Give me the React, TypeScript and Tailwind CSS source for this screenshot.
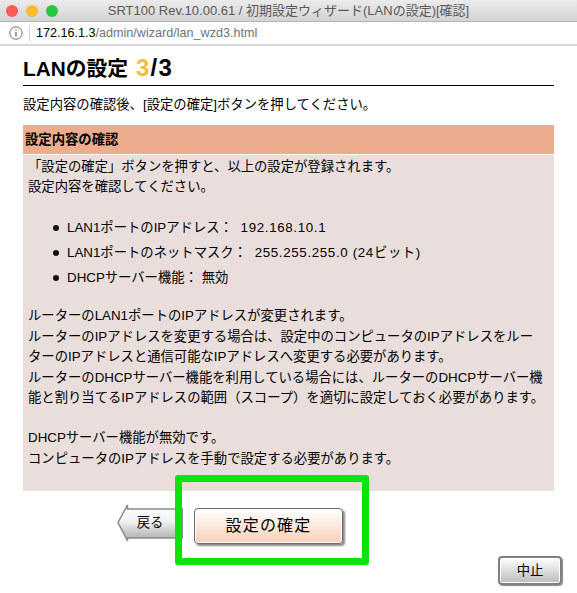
import React from "react";

const font = { fontFamily: '"Liberation Sans", "Noto Sans CJK JP", sans-serif' };

const Bullet = ({ children }: { children: React.ReactNode }) => (
  <li className="flex items-center gap-[8px]">
    <span className="h-[6px] w-[6px] shrink-0 rounded-full bg-[#111111]" />
    <span>{children}</span>
  </li>
);

const App = () => {
  return (
    <div className="relative h-[593px] w-[577px] overflow-hidden bg-white text-[13.33px] text-black" style={font}>
      {/* window title */}
      <div className="relative flex h-[22px] items-center justify-center border-b border-[#b4b4b4] bg-gradient-to-b from-[#ebebeb] to-[#d3d3d3] text-[13px] text-[#5a5a5a]">
        <div className="absolute left-[6px] top-[5px] flex gap-[8px]">
          <span className="h-[12px] w-[12px] rounded-full bg-[#fc5b57]" />
          <span className="h-[12px] w-[12px] rounded-full bg-[#fdbc2e]" />
          <span className="h-[12px] w-[12px] rounded-full bg-[#27c840]" />
        </div>
        <span>SRT100 Rev.10.00.61 / 初期設定ウィザード(LANの設定)[確認]</span>
      </div>

      {/* address bar */}
      <div className="flex h-[24px] items-center border-b-2 border-[#d8d8d8] bg-white pl-[9px] text-[12.6px]">
        <svg width="14" height="14" viewBox="0 0 14 14" fill="none" stroke="#6b6b6b">
          <circle cx="7" cy="7" r="6.2" />
          <path d="M7 6v4.5M7 3.4v1.2" strokeWidth="1.3" />
        </svg>
        <span className="ml-[6px] mr-[6px] h-[16px] w-px bg-[#cfcfcf]" />
        <span>172.16.1.3</span>
        <span className="text-[#6b737c]">/admin/wizard/lan_wzd3.html</span>
      </div>

      {/* page */}
      <div className="px-[23px]">
        <h1 className="h-[40px] border-b border-black pt-[10px] text-[20.8px] font-bold leading-[24px]">
          LANの設定{" "}
          <span className="ml-[2px] text-[24px] leading-[24px] tracking-[1.3px]">
            <span className="text-[#fdbb3b]">3</span>/3
          </span>
        </h1>
        <p className="mt-[9px] leading-[20px]">設定内容の確認後、[設定の確定]ボタンを押してください。</p>

        <div className="mt-[10px] bg-[#e9dedc]">
          <div className="flex h-[30px] items-center border-b border-white bg-[#eeac8e] px-[2px] font-bold">
            設定内容の確認
          </div>
          <div className="h-[336px] px-[5px] pt-[2px] leading-[20.4px]">
            <p>「設定の確定」ボタンを押すと、以上の設定が登録されます。</p>
            <p>設定内容を確認してください。</p>
            <ul className="mb-[18px] mt-[20px] flex flex-col gap-[4.5px] pl-[25px] leading-[20.5px]">
              <Bullet>
                LAN1ポートのIPアドレス： <span className="ml-[4px] tracking-[0.65px]">192.168.10.1</span>
              </Bullet>
              <Bullet>
                LAN1ポートのネットマスク： <span className="ml-[4px] tracking-[0.65px]">255.255.255.0 (24ビット)</span>
              </Bullet>
              <Bullet>DHCPサーバー機能： 無効</Bullet>
            </ul>
            <p>ルーターのLAN1ポートのIPアドレスが変更されます。</p>
            <p>ルーターのIPアドレスを変更する場合は、設定中のコンピュータのIPアドレスをルー</p>
            <p>ターのIPアドレスと通信可能なIPアドレスへ変更する必要があります。</p>
            <p>ルーターのDHCPサーバー機能を利用している場合には、ルーターのDHCPサーバー機</p>
            <p>能と割り当てるIPアドレスの範囲（スコープ）を適切に設定しておく必要があります。</p>
            <p className="mt-[20px]">DHCPサーバー機能が無効です。</p>
            <p>コンピュータのIPアドレスを手動で設定する必要があります。</p>
          </div>
        </div>

        {/* buttons */}
        <div className="mt-[13px] flex items-start pl-[94px]">
          <div className="relative flex h-[38px] w-[66px] items-center justify-center">
            <svg className="absolute inset-0" width="66" height="38" viewBox="0 0 66 38">
              <defs>
                <linearGradient id="back" x1="0" y1="0" x2="0" y2="1">
                  <stop offset="0" stopColor="#ffffff" />
                  <stop offset="0.45" stopColor="#f2f2f2" />
                  <stop offset="1" stopColor="#a8a8a8" />
                </linearGradient>
              </defs>
              <path d="M10.5 1v4h55v29h-55v3L1 18.5z" fill="url(#back)" stroke="#8a8a8a" strokeWidth="1.5" />
            </svg>
            <span className="relative">戻る</span>
          </div>
          <div className="ml-[11px] mt-[4px] flex h-[36px] w-[149px] items-center justify-center rounded-[4px] border border-[#6f6a67] bg-gradient-to-b from-white to-[#f9cfb8] text-[16px] tracking-[1.2px] shadow-[inset_0_0_0_1px_#ffffff,2px_2px_2px_#8a8a8a]">
            設定の確定
          </div>
        </div>

        <div className="mt-[12px] flex justify-end">
          <div className="-mr-[8px] flex h-[29px] w-[64px] items-center justify-center rounded-[4px] border-2 border-[#7f7f7f] bg-gradient-to-b from-white to-[#bcbcbc] shadow-[inset_0_0_0_1px_#ffffff,1px_1px_1px_#8a8a8a]">
            中止
          </div>
        </div>
      </div>

      {/* green annotation box */}
      <div className="absolute left-[175px] top-[475px] h-[90px] w-[194px] rounded-[3px] border-[7px] border-[#0be30b]" />
    </div>
  );
};

export default App;
